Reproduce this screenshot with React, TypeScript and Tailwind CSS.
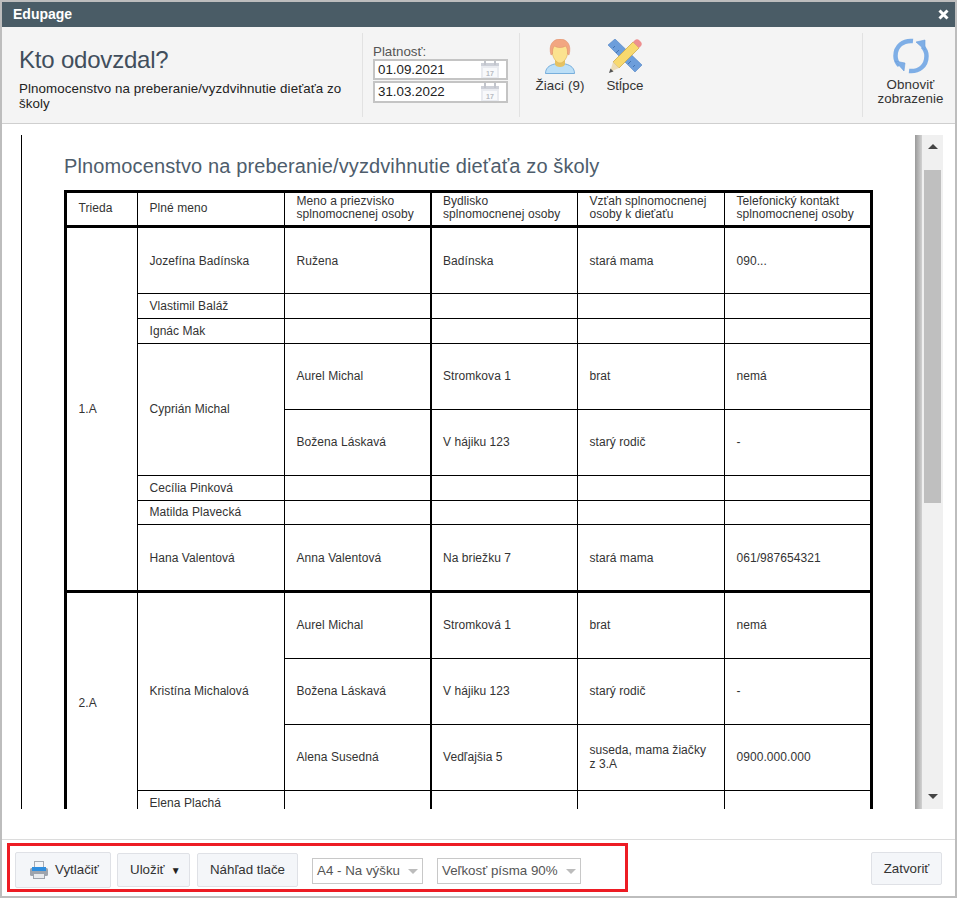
const F = "font-['Liberation_Sans',Arial,sans-serif]";

function Cal() {
  return (
    <svg width="20" height="19" viewBox="0 0 20 19" className="shrink-0">
      <rect x="1" y="3" width="18" height="16" fill="#e9ebf0" />
      <rect x="1" y="3" width="18" height="3" fill="#cdd0d8" />
      <rect x="4" y="0" width="2" height="5" fill="#c2c5cc" />
      <rect x="14" y="0" width="2" height="5" fill="#c2c5cc" />
      <rect x="3" y="8" width="14" height="9" fill="#f8f9fb" />
      <text x="10" y="15.500" fontSize="7" textAnchor="middle" fill="#b9bcc3" fontWeight="700" fontFamily="Liberation Sans">17</text>
    </svg>
  );
}

function DateInput({ v, h }: { v: string; h: string }) {
  return (
    <div className={"flex items-center justify-between w-[135px] border-2 border-[#c4c4c4] bg-white pl-[3px] pr-[6px] text-[13.33px] text-[#222] overflow-hidden " + h}>
      <span>{v}</span>
      <Cal />
    </div>
  );
}

function Student() {
  return (
    <svg width="30" height="35" viewBox="0 0 30 35">
      <path d="M0.500 34.500c0-5 3-8 9-9.500h11c6 1.500 9 4.500 9 9.500z" fill="#bcdff7" stroke="#5f9fd6" strokeWidth="0.8" />
      <path d="M10 21h10v4c0 4-10 4-10 0z" fill="#e6c262" />
      <path d="M7 11c0-6 3-9 8-9s8 3 8 9c0 7-4 13-8 13s-8-6-8-13z" fill="#fbe28f" stroke="#dcae52" strokeWidth="0.6" />
      <path d="M6 16C3 6 8 0 15 0s12 6 9 16l-1.500-1c0-3 0-6-2-8-3 2-8 2-11 0-2 2-2 5-2 8z" fill="#f2a681" stroke="#dc8c66" strokeWidth="0.5" />
    </svg>
  );
}

function Tools() {
  return (
    <svg width="35" height="34" viewBox="0 0 35 34">
      <path d="M0 6L7 0L34 26L27 33Z" fill="#6d9edb" stroke="#4f83c4" strokeWidth="0.6" />
      <path d="M7 7l-2 2M11 11l-3 3M15 15l-2 2M23 22l-3 3M27 26l-2 2" stroke="#3f6fae" strokeWidth="0.9" />
      <path d="M5 23L25 3L31 9L11 29Z" fill="#f8d96e" stroke="#c9a440" strokeWidth="0.7" />
      <path d="M25 3l2-2c1-1 3-1 4 0l2 2c1 1 1 3 0 4l-2 2z" fill="#ee8f8f" />
      <path d="M5 23l6 6-9 4z" fill="#ecdcb6" />
      <path d="M1 34l1.500-4.500 3 3z" fill="#555" />
    </svg>
  );
}

function Refresh() {
  return (
    <svg width="36" height="36" viewBox="0 0 36 36" fill="none">
      <path d="M20 3C10 2 2.500 8 2.500 18c0 4 1.500 7 4 9.500" stroke="#7eaee6" strokeWidth="4.500" />
      <path d="M2 23l10 2-1 8z" fill="#7eaee6" stroke="#6a9ddb" strokeWidth="0.6" />
      <path d="M16 33c10 1 17.500-5 17.500-15 0-4-1.500-7-4-9.500" stroke="#7eaee6" strokeWidth="4.500" />
      <path d="M23 4l9-2 0 10z" fill="#7eaee6" stroke="#6a9ddb" strokeWidth="0.6" />
    </svg>
  );
}

function Printer() {
  return (
    <svg width="20" height="20" viewBox="0 0 20 20">
      <rect x="5.500" y="1.500" width="9" height="7" fill="#f4f5f7" stroke="#a6abb3" />
      <rect x="1" y="8" width="18" height="8" rx="1.500" fill="#9ea4ad" />
      <rect x="3" y="7" width="14" height="4" fill="#2f8ede" />
      <rect x="4.500" y="13.500" width="11" height="5" fill="#e8eaed" stroke="#9ea4ad" />
    </svg>
  );
}

function Btn({ children, className = "" }: { children: React.ReactNode; className?: string }) {
  return (
    <div className={"flex items-center shrink-0 border border-[#dfe1e6] rounded-[2px] bg-[#f4f6f9] text-[13.33px] text-[#333] " + className}>
      {children}
    </div>
  );
}

function Sel({ v, w }: { v: string; w: string }) {
  return (
    <div className={"flex items-center justify-between shrink-0 h-[26px] border border-[#c8c8c8] bg-white pl-[4px] pr-[4px] text-[13.33px] text-[#555] " + w}>
      <span>{v}</span>
      <span className="w-0 h-0 border-l-[5px] border-r-[5px] border-t-[5px] border-l-transparent border-r-transparent border-t-[#bcbcbc]" />
    </div>
  );
}

type R = { cls?: [string, number]; name: string; nameSpan?: number; p?: string[]; h: number; thick?: boolean; up?: boolean };

const rows: R[] = [
  { cls: ["1.A", 8], name: "Jozefína Badínska", p: ["Ružena", "Badínska", "stará mama", "090..."], h: 66 },
  { name: "Vlastimil Baláž", h: 25 },
  { name: "Ignác Mak", h: 25 },
  { name: "Cyprián Michal", nameSpan: 2, p: ["Aurel Michal", "Stromkova 1", "brat", "nemá"], h: 66, up: true },
  { name: "", p: ["Božena Láskavá", "V hájiku 123", "starý rodič", "-"], h: 66, up: true },
  { name: "Cecília Pinková", h: 25 },
  { name: "Matilda Plavecká", h: 24, up: true },
  { name: "Hana Valentová", p: ["Anna Valentová", "Na briežku 7", "stará mama", "061/987654321"], h: 67 },
  { cls: ["2.A", 4], thick: true, name: "Kristína Michalová", nameSpan: 3, p: ["Aurel Michal", "Stromková 1", "brat", "nemá"], h: 67, up: true },
  { name: "", p: ["Božena Láskavá", "V hájiku 123", "starý rodič", "-"], h: 66, up: true },
  { name: "", p: ["Alena Susedná", "Vedľajšia 5", "suseda, mama žiačky z 3.A", "0900.000.000"], h: 66, up: true },
  { name: "Elena Plachá", h: 25 },
];

const td = "border border-black px-[11.5px] text-[12px] tracking-[0.06px] text-[#333] align-middle";
const heads = [
  "Trieda",
  "Plné meno",
  "Meno a priezvisko splnomocnenej osoby",
  "Bydlisko splnomocnenej osoby",
  "Vzťah splnomocnenej osoby k dieťaťu",
  "Telefonický kontakt splnomocnenej osoby",
];

export default function App() {
  return (
    <div className={"w-[957px] h-[898px] flex flex-col bg-white border-2 border-[#bdbdbd] overflow-hidden " + F}>
      <div className="h-[25px] shrink-0 bg-[#4a5c66] flex items-center justify-between pl-[11px] pr-[6px] text-white text-[14px] font-bold leading-none">
        <span className="-mt-[2px]">Edupage</span>
        <svg width="11" height="11" viewBox="0 0 11 11"><path d="M1.500 1.500l8 8M9.500 1.500l-8 8" stroke="#fff" strokeWidth="3" /></svg>
      </div>

      <div className="h-[97px] shrink-0 bg-[#f4f4f4] border-b border-[#cfcfcf] flex py-[6px]">
        <div className="w-[361px] shrink-0 border-r border-[#e2e2e2] pl-[17px] pr-[18px]">
          <div className="mt-[13px] text-[24px] leading-[28px] tracking-[-0.2px] text-[#414e5c]">Kto odovzdal?</div>
          <div className="mt-[7px] text-[13.33px] leading-[15px] tracking-[0.08px] text-[#222]">
            Plnomocenstvo na preberanie/vyzdvihnutie dieťaťa zo školy
          </div>
        </div>
        <div className="w-[157px] shrink-0 border-r border-[#e2e2e2] pl-[10px] pt-[11px]">
          <div className="text-[13.33px] leading-[15px] text-[#555]">Platnosť:</div>
          <div className="flex flex-col gap-[1px]">
            <DateInput v="01.09.2021" h="h-[21px]" />
            <DateInput v="31.03.2022" h="h-[22px]" />
          </div>
        </div>
        <div className="flex-1 flex pl-[15px] gap-[21px] pt-[6px] text-[13.33px] text-[#333]">
          <div className="flex flex-col items-center w-[50px]">
            <Student />
            <div className="mt-[2px] whitespace-nowrap tracking-[0.1px]">Žiaci (9)</div>
          </div>
          <div className="flex flex-col items-center w-[38px]">
            <Tools />
            <div className="mt-[3px] whitespace-nowrap">Stĺpce</div>
          </div>
        </div>
        <div className="w-[93px] shrink-0 border-l border-[#e2e2e2] flex flex-col items-center pt-[5px] pl-[3px] text-[13.33px] leading-[14px] tracking-[0.1px] text-[#333] text-center">
          <Refresh />
          <div className="mt-[4px]">Obnoviť<br />zobrazenie</div>
        </div>
      </div>

      <div className="h-[715px] shrink-0 pt-[11px] pl-[19px] flex">
        <div className="w-[894px] h-[674px] shrink-0 border-l border-black bg-white pl-[42px] overflow-hidden">
          <h1 className="mt-[19px] text-[20px] leading-[24px] tracking-[0.12px] text-[#4e5d6c] font-normal">
            Plnomocenstvo na preberanie/vyzdvihnutie dieťaťa zo školy
          </h1>
          <table className="mt-[12px] table-fixed border-collapse border-[3px] border-black w-[806px]">
            <colgroup>
              <col className="w-[72px]" />
              <col className="w-[147px]" />
              <col className="w-[146px]" />
              <col className="w-[147px]" />
              <col className="w-[147px]" />
              <col className="w-[147px]" />
            </colgroup>
            <tbody>
              <tr className="h-[35px] border-b-[3px] border-black">
                {heads.map((h, i) => (
                  <td key={i} className={td + " leading-[13px] pb-[2px]" + (i === 3 ? " border-l-2" : "")}>{h}</td>
                ))}
              </tr>
              {rows.map((r, i) => (
                <tr key={i} style={{ height: i === 0 ? r.h + 1 : r.h }} className={r.thick ? "border-t-[3px] border-black" : ""}>
                  {r.cls && <td rowSpan={r.cls[1]} className={td + " leading-[14px]" + (r.thick ? " pb-[2px]" : "")}>{r.cls[0]}</td>}
                  {r.name && <td rowSpan={r.nameSpan ?? 1} className={td + " leading-[14px]" + (r.up ? " pb-[2px]" : "")}>{r.name}</td>}
                  <td className={td + " leading-[14px]" + (r.up ? " pb-[2px]" : "")}>{r.p?.[0]}</td>
                  <td className={td + " leading-[14px] border-l-2" + (r.up ? " pb-[2px]" : "")}>{r.p?.[1]}</td>
                  <td className={td + " leading-[14px]" + (r.up ? " pb-[2px]" : "")}>{r.p?.[2]}</td>
                  <td className={td + " leading-[14px]" + (r.up ? " pb-[2px]" : "")}>{r.p?.[3]}</td>
                </tr>
              ))}
            </tbody>
          </table>
        </div>
        <div className="w-[28px] h-[674px] shrink-0 flex">
          <div className="w-[7px] bg-gradient-to-r from-[#9a9a9a] to-[#d2d2d2]" />
          <div className="flex-1 bg-[#f0f0f0] flex flex-col">
            <div className="h-[35px] shrink-0 flex items-center justify-center pb-[12px]">
              <span className="w-0 h-0 border-l-[5px] border-r-[5px] border-b-[5px] border-l-transparent border-r-transparent border-b-[#444]" />
            </div>
            <div className="h-[333px] shrink-0 mx-[2px] bg-[#bfbfbf]" />
            <div className="flex-1 flex items-end justify-center pb-[10px]">
              <span className="w-0 h-0 border-l-[5px] border-r-[5px] border-t-[5px] border-l-transparent border-r-transparent border-t-[#444]" />
            </div>
          </div>
        </div>
      </div>

      <div className="flex-1 border-t border-[#dcdcdc] flex items-start justify-between pl-[5px] pr-[13px]">
        <div className="mt-[3px] w-[621px] h-[49px] border-[3px] border-[#ed1c24] flex items-start pl-[5px] pt-[6px]">
          <Btn className="w-[96px] h-[36px] pl-[13px] gap-[6px]"><Printer />Vytlačiť</Btn>
          <Btn className="ml-[6px] mt-[1px] w-[73px] h-[34px] pl-[12px] gap-[6px]">Uložiť<span className="text-[10px] text-[#222]">▼</span></Btn>
          <Btn className="ml-[7px] mt-[1px] w-[101px] h-[34px] justify-center">Náhľad tlače</Btn>
          <Sel v="A4 - Na výšku" w="ml-[14px] mt-[6px] w-[111px]" />
          <Sel v="Veľkosť písma 90%" w="ml-[14px] mt-[6px] w-[144px]" />
        </div>
        <Btn className="mt-[12px] w-[71px] h-[33px] justify-center">Zatvoriť</Btn>
      </div>
    </div>
  );
}
